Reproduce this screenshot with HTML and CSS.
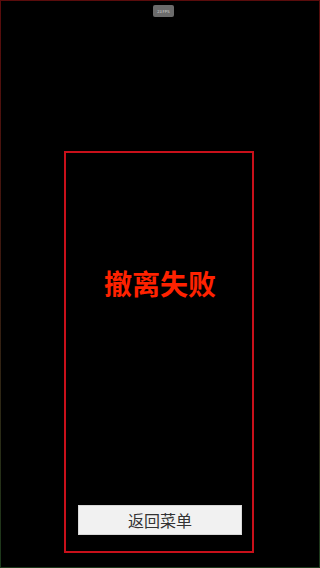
FILE: index.html
```html
<!DOCTYPE html>
<html>

<head>
  <meta charset="utf-8">
  <meta name="viewport" content="width=device-width">
  <title>撤离失败</title>

  <link rel="stylesheet" href="styles.css">
</head>

<body>
  <div class="screen">
    <div class="fps">23 FPS</div>

    <div class="panel">
      <div class="result-title">撤离失败</div>
      <button class="menu-btn">返回菜单</button>
    </div>
  </div>
</body>

</html>
```

FILE: styles.css
```css
html,
body {
  margin: 0;
  padding: 0;
  width: 100%;
  height: 100%;
  overflow: hidden;
  background: #000;
  font-family: "Noto Sans CJK SC", "Noto Sans", sans-serif;
}

.screen {
  position: relative;
  box-sizing: border-box;
  width: 320px;
  height: 568px;
  border: 1px solid;
  border-image: linear-gradient(to bottom, #5a0c0c, #3a1a10 50%, #1c3a1c) 1;
  padding-top: 150px;
}

.fps {
  position: absolute;
  top: 4px;
  left: 152px;
  width: 21px;
  height: 12px;
  border-radius: 2px;
  background: #6b6b6b;
  color: #d8d8d8;
  font-size: 4px;
  line-height: 12px;
  text-align: center;
}

.panel {
  box-sizing: border-box;
  width: 190px;
  height: 402px;
  margin-left: 63px;
  border: 2px solid #c8101a;
  display: flex;
  flex-direction: column;
  align-items: center;
  padding: 110px 11px 16px 13px;
}

.result-title {
  color: #ff2200;
  font-size: 28px;
  font-weight: bold;
  line-height: 40px;
  flex: 1;
}

.menu-btn {
  width: 164px;
  height: 30px;
  padding: 0;
  border: 1px solid #d8d8d8;
  background: #f1f1f1;
  color: #333;
  font-family: inherit;
  font-size: 16px;
}
```
